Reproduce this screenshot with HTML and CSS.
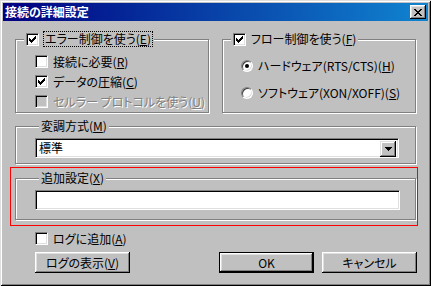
FILE: index.html
```html
<!DOCTYPE html>
<html lang="ja">
<head>
    <meta charset="UTF-8">
    <title>接続の詳細設定</title>
    <link rel="stylesheet" href="styles.css">
</head>
<body>
    <div class="window">
        <div class="titlebar">
            <span class="title">接続の詳細設定</span>
            <button class="close-btn">
                <svg width="8" height="7" viewBox="0 0 8 7"><path d="M0 0h2v1H0zM6 0h2v1H6zM1 1h2v1H1zM5 1h2v1H5zM2 2h4v1H2zM3 3h2v1H3zM2 4h4v1H2zM1 5h2v1H1zM5 5h2v1H5zM0 6h2v1H0zM6 6h2v1H6z" fill="#000"/></svg>
            </button>
        </div>

        <div class="content">
            <div class="top-row">
                <div class="group">
                    <div class="group-label">
                        <span class="check checked"></span>
                        <span class="focus">エラー制御を使う(<u>E</u>)</span>
                    </div>
                    <div class="options">
                        <div class="option"><span class="check"></span><span>接続に必要(<u>R</u>)</span></div>
                        <div class="option"><span class="check checked"></span><span>データの圧縮(<u>C</u>)</span></div>
                        <div class="option disabled"><span class="check"></span><span>セルラー プロトコルを使う(<u>U</u>)</span></div>
                    </div>
                </div>

                <div class="group">
                    <div class="group-label">
                        <span class="check checked"></span>
                        <span>フロー制御を使う(<u>F</u>)</span>
                    </div>
                    <div class="options radios">
                        <div class="option"><span class="radio selected"></span><span>ハードウェア(RTS/CTS)(<u>H</u>)</span></div>
                        <div class="option"><span class="radio"></span><span>ソフトウェア(XON/XOFF)(<u>S</u>)</span></div>
                    </div>
                </div>
            </div>

            <div class="group wide">
                <div class="group-label text-label"><span>変調方式(<u>M</u>)</span></div>
                <div class="combo">
                    <span class="combo-value">標準</span>
                    <span class="combo-btn">
                        <svg width="7" height="4" viewBox="0 0 7 4"><path d="M0 0h7v1H0zM1 1h5v1H1zM2 2h3v1H2zM3 3h1v1H3z" fill="#000"/></svg>
                    </span>
                </div>
            </div>

            <div class="highlight">
                <div class="group wide extra">
                    <div class="group-label text-label"><span>追加設定(<u>X</u>)</span></div>
                    <div class="field"></div>
                </div>
            </div>

            <div class="option log-row"><span class="check"></span><span>ログに追加(<u>A</u>)</span></div>

            <div class="buttons">
                <button class="btn">ログの表示(<u>V</u>)</button>
                <div class="btn-group">
                    <button class="btn default">OK</button>
                    <button class="btn">キャンセル</button>
                </div>
            </div>
        </div>
    </div>
</body>
</html>
```

FILE: styles.css
```css
* {
    box-sizing: border-box;
    margin: 0;
    padding: 0;
}

body {
    background: #c0c0c0;
    font-family: "Noto Sans CJK JP", sans-serif;
    font-size: 12px;
    font-feature-settings: "palt";
    color: #000;
}

.window {
    width: 431px;
    height: 286px;
    padding: 3px;
    background: #c0c0c0;
    box-shadow: inset 1px 1px #dfdfdf, inset -1px -1px #000,
                inset 2px 2px #fff, inset -2px -2px #808080;
}

.titlebar {
    height: 18px;
    display: flex;
    align-items: center;
    justify-content: space-between;
    padding: 0 2px 0 2px;
    background: linear-gradient(to right, #000080, #1084d0);
}

.title {
    color: #fff;
    font-weight: bold;
    font-size: 12px;
    line-height: 18px;
}

.close-btn {
    width: 16px;
    height: 14px;
    display: flex;
    align-items: center;
    justify-content: center;
    background: #c0c0c0;
    border: none;
    box-shadow: inset -1px -1px #000, inset 1px 1px #fff,
                inset -2px -2px #808080, inset 2px 2px #dfdfdf;
}

.content {
    padding: 18px 12px 0 12px;
}

.top-row {
    display: grid;
    grid-template-columns: 194px 194px;
    gap: 13px;
}

.group {
    border: 1px solid #808080;
    box-shadow: inset 1px 1px #fff, 1px 1px #fff;
}

.group-label {
    display: flex;
    align-items: center;
    gap: 5px;
    width: max-content;
    height: 14px;
    line-height: 14px;
    margin: -8px 0 0 8px;
    padding: 0 2px;
    background: #c0c0c0;
}

.text-label {
    margin-left: 4px;
}

.focus {
    outline: 1px dotted #000;
    padding: 0 1px;
}

.options {
    padding: 5px 0 1px 19px;
}

.option {
    display: flex;
    align-items: center;
    gap: 5px;
    height: 20px;
    white-space: nowrap;
}

.radios {
    padding: 6px 0 0 18px;
}

.radios .option {
    height: 27px;
}

.disabled {
    color: #808080;
    text-shadow: 1px 1px #fff;
}

.check {
    width: 13px;
    height: 13px;
    flex: none;
    background: #fff;
    border: 1px solid;
    border-color: #808080 #fff #fff #808080;
    box-shadow: inset 1px 1px #000, inset -1px -1px #dfdfdf;
}

.checked {
    background: #fff url("data:image/svg+xml,%3Csvg xmlns='http://www.w3.org/2000/svg' width='7' height='7'%3E%3Cpath d='M6 0h1v1H6zM5 1h2v1H5zM0 2h1v1H0zM4 2h3v1H4zM0 3h2v1H0zM3 3h3v1H3zM0 4h5v1H0zM1 5h3v1H1zM2 6h1v1H2z' fill='%23000'/%3E%3C/svg%3E") no-repeat 2px 2px;
}

.disabled .check {
    background: #c0c0c0;
}

.radio {
    width: 12px;
    height: 12px;
    flex: none;
    border-radius: 50%;
    background: #fff;
    border: 1px solid;
    border-color: #808080 #fff #fff #808080;
    box-shadow: inset 1px 1px #404040, inset -1px -1px #dfdfdf;
    display: flex;
    align-items: center;
    justify-content: center;
}

.selected::after {
    content: "";
    width: 4px;
    height: 4px;
    border-radius: 50%;
    background: #000;
}

.wide {
    margin-top: 13px;
    padding: 0 0 5px 19px;
}

.combo {
    width: 364px;
    height: 20px;
    margin-top: 5px;
    display: flex;
    align-items: center;
    justify-content: space-between;
    padding: 2px;
    background: #fff;
    border: 1px solid;
    border-color: #808080 #fff #fff #808080;
    box-shadow: inset 1px 1px #000, inset -1px -1px #dfdfdf;
}

.combo-value {
    padding-left: 1px;
    line-height: 14px;
}

.combo-btn {
    width: 16px;
    height: 16px;
    margin-top: 1px;
    display: flex;
    align-items: center;
    justify-content: center;
    background: #c0c0c0;
    box-shadow: inset -1px -1px #000, inset 1px 1px #dfdfdf,
                inset -2px -2px #808080, inset 2px 2px #fff;
}

.highlight {
    margin: 3px -2px 0 -5px;
    padding: 10px 1px 5px 4px;
    border: 1px solid #ff0000;
}

.extra {
    margin-top: 0;
    padding-bottom: 9px;
}

.field {
    width: 365px;
    height: 20px;
    margin-top: 5px;
    background: #fff;
    border: 1px solid;
    border-color: #808080 #fff #fff #808080;
    box-shadow: inset 1px 1px #000, inset -1px -1px #dfdfdf;
}

.log-row {
    height: 15px;
    margin-top: 5px;
    padding-left: 20px;
}

.buttons {
    display: flex;
    justify-content: space-between;
    margin: 6px -1px 0 0;
    padding-left: 20px;
}

.btn-group {
    display: flex;
    gap: 8px;
}

.btn {
    width: 95px;
    height: 21px;
    background: #c0c0c0;
    border: none;
    font-family: inherit;
    font-size: 12px;
    font-feature-settings: "palt";
    color: #000;
    box-shadow: inset -1px -1px #000, inset 1px 1px #fff,
                inset -2px -2px #808080, inset 2px 2px #dfdfdf;
}

.default {
    box-shadow: inset 0 0 0 1px #000, inset -2px -2px #000, inset 2px 2px #fff,
                inset -3px -3px #808080, inset 3px 3px #dfdfdf;
}
```
